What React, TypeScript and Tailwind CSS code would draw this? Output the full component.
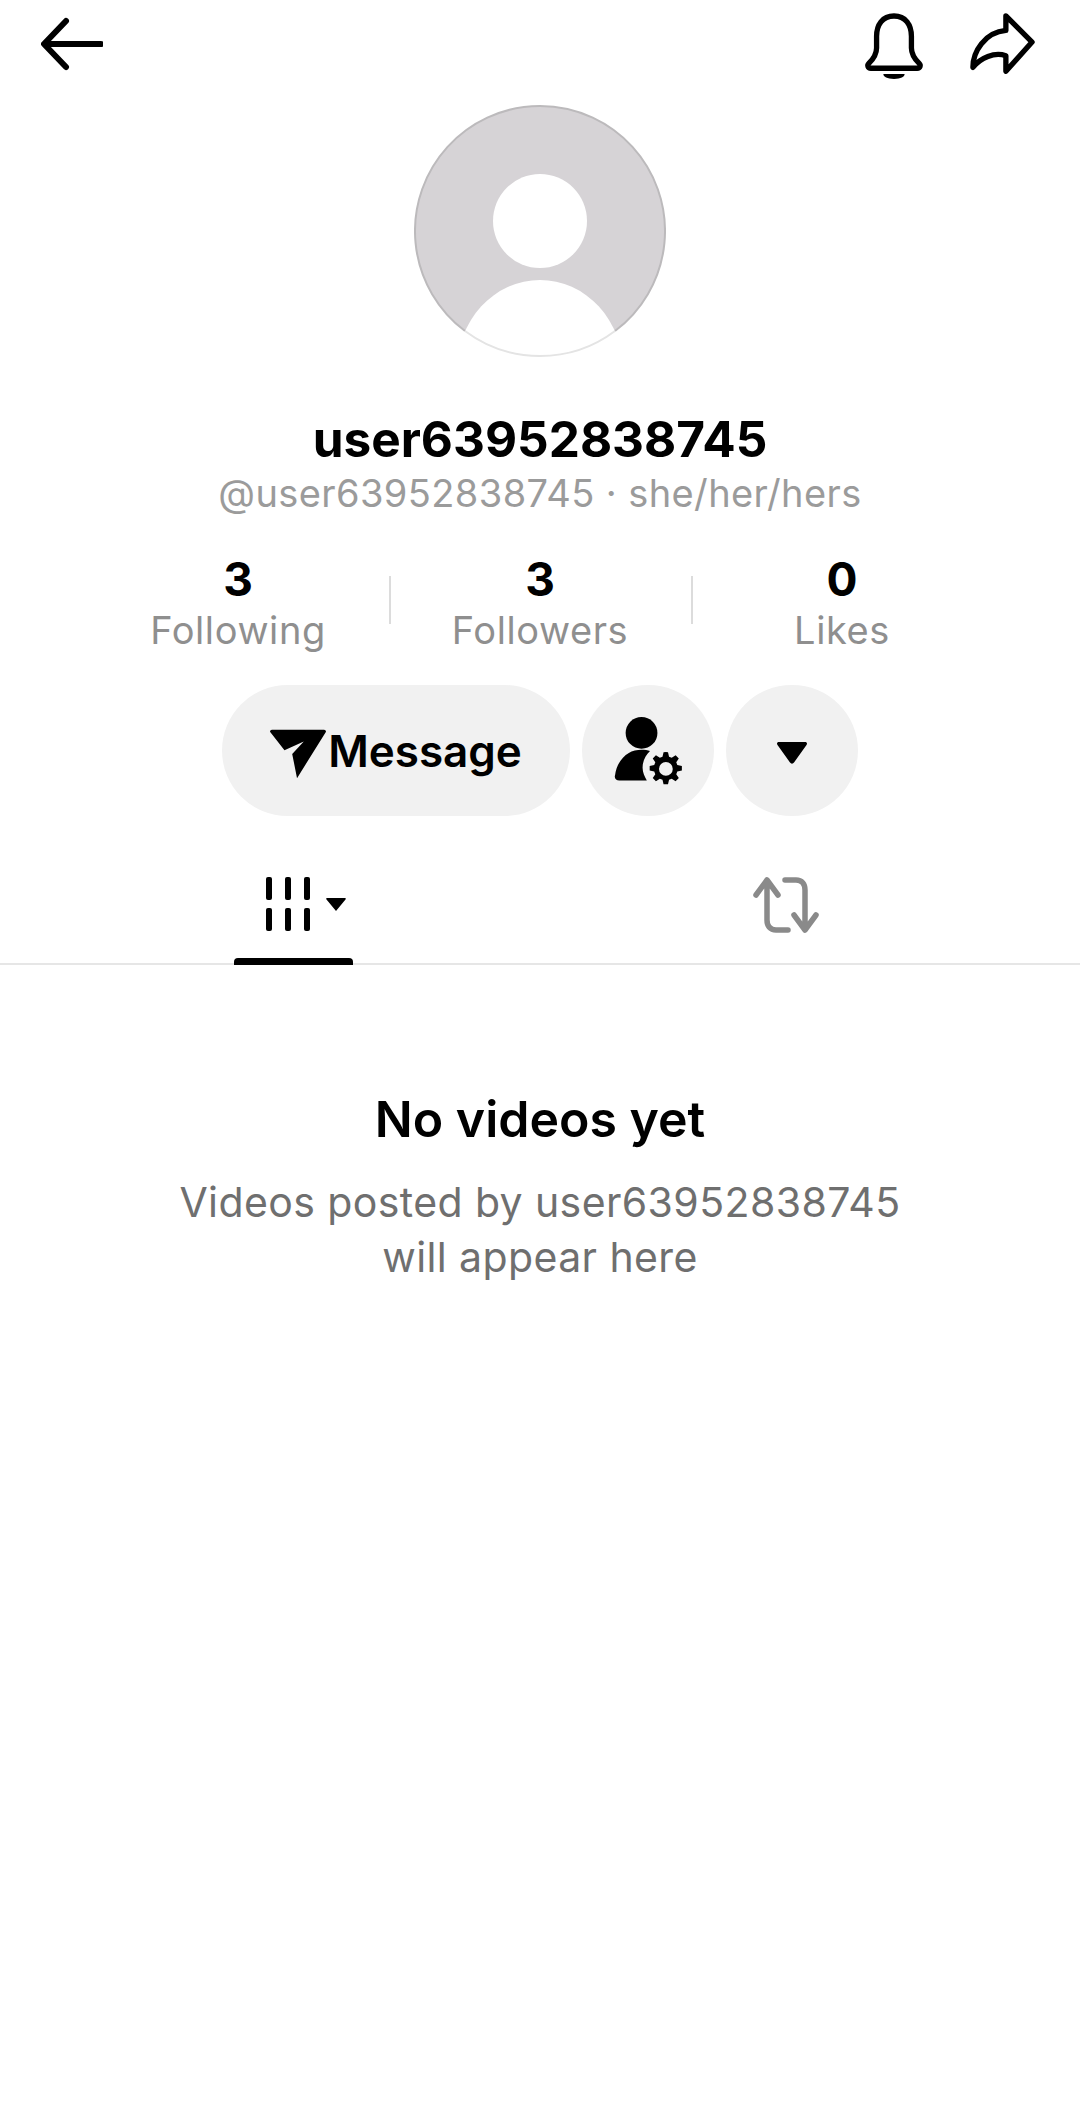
export default function App() {
  return (
    <div className="w-[1080px] h-[2120px] bg-white flex flex-col items-center font-['Inter','Liberation_Sans',sans-serif] overflow-hidden">
      {/* top bar */}
      <div className="w-full h-[105px] flex justify-between items-start pl-[41px] pr-[44px] pt-[10px]">
        <svg width="62" height="56" viewBox="0 0 62 56" fill="none" stroke="#000" strokeWidth="6" strokeLinecap="round" strokeLinejoin="round" className="mt-[6px]">
          <path d="M25 5 3 28l22 23M4 28h56" />
        </svg>
        <div className="flex items-start gap-[44px]">
          <svg width="60" height="66" viewBox="0 0 62 68" fill="none" className="mt-[3px]">
            <path d="M31 3C19 3 13 12 13 24v12c0 6-3 11-8 16-2 2-1 5 2 5h48c3 0 4-3 2-5-5-5-8-10-8-16V24C49 12 43 3 31 3Z" stroke="#000" strokeWidth="5.500" strokeLinejoin="round" />
            <path d="M20 63h22c0 3-4 5-11 5s-11-2-11-5Z" fill="#000" />
          </svg>
          <svg width="68" height="64" viewBox="0 0 68 66" fill="none" stroke="#000" strokeWidth="5.500" strokeLinejoin="round" className="mt-[3px]">
            <path d="M38 3 65 30 38 60V44C26 40 12 46 4 56 4 40 16 20 38 18V3Z" />
          </svg>
        </div>
      </div>

      {/* avatar */}
      <svg width="252" height="252" viewBox="0 0 252 252" className="shrink-0">
        <defs>
          <clipPath id="avatar-clip">
            <circle cx="126" cy="126" r="125" />
          </clipPath>
        </defs>
        <circle cx="126" cy="126" r="125" fill="#d6d3d6" />
        <circle cx="126" cy="116" r="47" fill="#fff" />
        <ellipse cx="126" cy="265" rx="83" ry="90" fill="#fff" clipPath="url(#avatar-clip)" />
        <path d="M51 226A125 125 0 1 1 201 226" fill="none" stroke="#bcbabc" strokeWidth="2" />
        <path d="M51 226A125 125 0 0 0 201 226" fill="none" stroke="#e4e4e4" strokeWidth="2" />
      </svg>

      {/* names */}
      <div className="mt-[54px] text-[49.500px] leading-[56px] font-bold text-black">user63952838745</div>
      <div className="mt-[4px] text-[38px] leading-[44px] text-[#9b9b9b] tracking-[0.4px]">@user63952838745 · she/her/hers</div>

      {/* stats */}
      <div className="mt-[35px] w-[906px] grid grid-cols-3">
        <Stat value="3" label="Following" />
        <Stat value="3" label="Followers" divided />
        <Stat value="0" label="Likes" divided />
      </div>

      {/* actions */}
      <div className="mt-[33px] flex gap-[12px]">
        <button className="w-[348px] h-[131px] rounded-full bg-[#f1f1f1] flex items-center justify-center gap-[2px] text-[44px] font-semibold text-black">
          <svg width="56" height="50" viewBox="0 0 58 50" className="mt-[6px]">
            <path d="M0 2C0 1 1 0 2 0h54c1 0 2 1 2 2L28 50 23 25 35 12 15 21 0 2Z" fill="#000" />
          </svg>
          Message
        </button>
        <button className="w-[132px] h-[131px] rounded-full bg-[#f1f1f1] flex items-center justify-center">
          <svg width="72" height="72" viewBox="0 0 68 68" fill="#000" className="mt-[4px] ml-[4px]">
            <ellipse cx="26" cy="15" rx="15" ry="15" />
            <path d="M14 34c3-2 8-3 12-3 3 0 6 .5 8 1-4 4-7 9-7 16 0 5 2 8 4 12H5c-3 0-5-2-4-5 1-9 6-17 13-21Z" />
            <path fillRule="evenodd" d="M49 33l2 .2 1 4.300 2.500 1 3.700-2.400 3 3-2.400 3.700 1 2.500 4.300 1v4.200l-4.300 1-1 2.500 2.400 3.700-3 3-3.700-2.400-2.500 1-1 4.300h-4.200l-1-4.300-2.500-1-3.700 2.400-3-3 2.400-3.700-1-2.500-4.300-1v-4.200l4.300-1 1-2.500-2.400-3.700 3-3 3.700 2.400 2.500-1 1-4.300Zm0 9.500a6.500 6.500 0 1 0 0 13 6.500 6.500 0 0 0 0-13Z" />
          </svg>
        </button>
        <button className="w-[132px] h-[131px] rounded-full bg-[#f1f1f1] flex items-center justify-center">
          <svg width="30" height="22" viewBox="0 0 30 22" fill="#000" className="mt-[4px]">
            <path d="M2 0h26c2 0 2.500 1.500 1.500 3L17 20.500c-1 1.500-3 1.500-4 0L.5 3C-.5 1.500 0 0 2 0Z" />
          </svg>
        </button>
      </div>

      {/* tabs */}
      <div className="mt-[58px] w-full h-[91px] grid grid-cols-2 border-b-2 border-[#e6e6e6] relative">
        <div className="relative">
          <div className="absolute -bottom-[2px] left-[234px] w-[119px] h-[7px] rounded-t-[4px] bg-black" />
          <div className="absolute left-[266px] top-[3px] flex items-start">
            <svg width="44" height="54" viewBox="0 0 44 54" fill="#000">
              <rect x="0" y="0" width="6" height="23" rx="2" />
              <rect x="19" y="0" width="6" height="23" rx="2" />
              <rect x="38" y="0" width="6" height="23" rx="2" />
              <rect x="0" y="31" width="6" height="23" rx="2" />
              <rect x="19" y="31" width="6" height="23" rx="2" />
              <rect x="38" y="31" width="6" height="23" rx="2" />
            </svg>
            <svg width="20" height="13" viewBox="0 0 20 13" fill="#000" className="ml-[16px] mt-[21px]">
              <path d="M1 0h18c1 0 1 1 .5 1.500L10 13 .5 1.500C0 1 0 0 1 0Z" />
            </svg>
          </div>
        </div>
        <div className="relative">
          <svg width="68" height="58" viewBox="0 0 68 58" fill="none" stroke="#8a8a8a" strokeWidth="5.500" strokeLinecap="round" strokeLinejoin="round" className="absolute left-[212px] top-[2px]">
            <path d="M4 19 15 4l11 15M15 5v39c0 6 3 10 9 10h12" />
            <path d="M33 4h11c6 0 9 4 9 10v39M42 39l11 15 11-15" />
          </svg>
        </div>
      </div>

      {/* empty state */}
      <div className="mt-[126px] text-[50px] leading-[56px] font-semibold text-black">No videos yet</div>
      <div className="mt-[28px] text-center text-[41px] leading-[55px] tracking-[0.4px] text-[#6f6f6f]">
        Videos posted by user63952838745
        <br />
        will appear here
      </div>
    </div>
  );
}

function Stat({ value, label, divided }: { value: string; label: string; divided?: boolean }) {
  return (
    <div className="relative flex flex-col items-center">
      {divided && <div className="absolute left-0 top-[26px] h-[48px] w-[2px] bg-[#dcdcdc]" />}
      <div className="text-[46px] leading-[58px] font-bold text-black">{value}</div>
      <div className="text-[38px] leading-[44px] text-[#8f8f8f] tracking-[0.6px]">{label}</div>
    </div>
  );
}
